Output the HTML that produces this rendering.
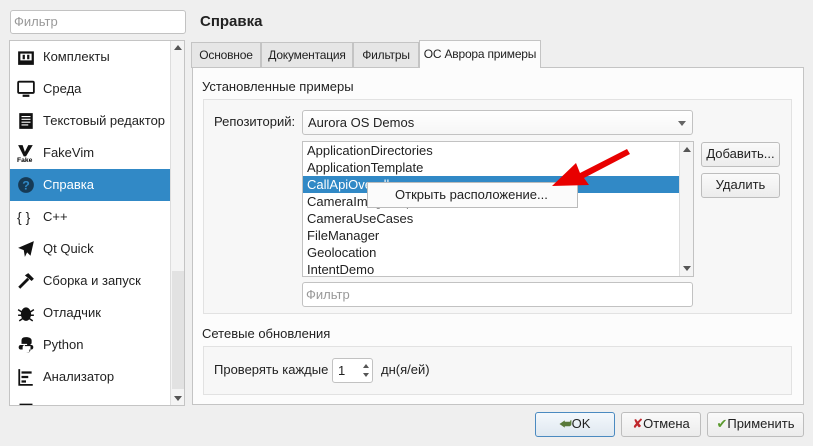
<!DOCTYPE html>
<html><head><meta charset="utf-8"><style>
*{box-sizing:border-box;margin:0;padding:0}
body{width:813px;height:446px;background:#efefef;font-family:"Liberation Sans","DejaVu Sans",sans-serif;font-size:13px;color:#222;position:relative;overflow:hidden}
.a{position:absolute;white-space:nowrap}
.inp{background:#fff;border:1px solid #c2c2c2;border-radius:3px}
.ph{color:#999}
.li{position:absolute;left:0;width:160px;height:32px;line-height:32px;padding-left:33px;white-space:nowrap}
.ic{position:absolute;left:7px;top:7px;width:18px;height:18px}
.tab{position:absolute;top:42px;height:26px;line-height:25px;background:#e6e6e6;border:1px solid #c4c4c4;border-bottom:none;text-align:center;font-size:12px;white-space:nowrap;letter-spacing:-0.2px}
.btn{position:absolute;background:linear-gradient(#fafafa,#ececec);border:1px solid #bdbdbd;border-radius:3px;text-align:center;line-height:22px;white-space:nowrap}
.it{height:17px;line-height:17px;padding-left:4px;white-space:nowrap}
</style></head><body>
<div class="a inp" style="left:10px;top:10px;width:176px;height:24px;line-height:22px;padding-left:3px"><span class="ph">Фильтр</span></div>
<div class="a" style="left:9px;top:40px;width:176px;height:366px;background:#fff;border:1px solid #c4c4c4;overflow:hidden">
 <div class="li" style="top:0"><svg class="ic" viewBox="0 0 16 16"><rect x="1" y="3" width="14" height="12" fill="#111"/><rect x="3" y="5" width="10" height="6" fill="#fff"/><rect x="5" y="6" width="2" height="4" fill="#111"/><rect x="9" y="6" width="2" height="4" fill="#111"/></svg>Комплекты</div>
 <div class="li" style="top:32px"><svg class="ic" viewBox="0 0 16 16"><rect x="1" y="1.5" width="14" height="10" rx="1" fill="none" stroke="#111" stroke-width="1.6"/><rect x="5" y="13" width="6" height="2" fill="#111"/></svg>Среда</div>
 <div class="li" style="top:64px"><svg class="ic" viewBox="0 0 16 16"><rect x="2" y="1" width="12" height="14" fill="#111"/><path d="M4 4h8M4 6.5h8M4 9h8M4 11.5h6" stroke="#fff"/></svg>Текстовый редактор</div>
 <div class="li" style="top:96px"><svg class="ic" viewBox="0 0 16 16"><path d="M1 1h4l2 6 3-6h4L8 11H6z" fill="#111"/><text x="0" y="16" font-size="6" font-family="Liberation Sans" font-weight="bold">Fake</text></svg>FakeVim</div>
 <div class="li" style="top:128px;background:#3189c6;color:#fff"><svg class="ic" viewBox="0 0 16 16"><circle cx="8" cy="8" r="7" fill="#163a55"/><text x="8" y="12" font-size="11" font-weight="bold" fill="#3189c6" text-anchor="middle" font-family="Liberation Sans">?</text></svg>Справка</div>
 <div class="li" style="top:160px"><span class="a" style="left:7px;top:0;font-size:14px">{ }</span>C++</div>
 <div class="li" style="top:192px"><svg class="ic" viewBox="0 0 16 16"><path d="M15 1L1 7l5 2 1 6 2-4 3 3z" fill="#111"/></svg>Qt Quick</div>
 <div class="li" style="top:224px"><svg class="ic" viewBox="0 0 16 16"><path d="M2 14l8-8" stroke="#111" stroke-width="2.5"/><path d="M7 3l3-2 5 5-2 2z" fill="#111"/></svg>Сборка и запуск</div>
 <div class="li" style="top:256px"><svg class="ic" viewBox="0 0 16 16"><ellipse cx="8" cy="9" rx="4.5" ry="6" fill="#111"/><path d="M1 5l3 2M15 5l-3 2M1 10h3M15 10h-3M2 15l3-2M14 15l-3-2" stroke="#111" stroke-width="1.3"/></svg>Отладчик</div>
 <div class="li" style="top:288px"><svg class="ic" viewBox="0 0 16 16"><path d="M8 1C4 1 4 3 4 5v2h5v1H3C1 8 1 12 3 12h2v-2c0-1 1-2 2-2h4c1 0 2-1 2-2V4c0-2-2-3-5-3z" fill="#111"/><path d="M8 15c4 0 4-2 4-4V9H7V8h6c2 0 2 4 0 4h-2v2c0 1-1 1-3 1z" fill="#111"/></svg>Python</div>
 <div class="li" style="top:320px"><svg class="ic" viewBox="0 0 16 16"><path d="M2 1v14h12" stroke="#111" stroke-width="1.6" fill="none"/><rect x="4" y="3" width="9" height="2" fill="#111"/><rect x="4" y="7" width="6" height="2" fill="#111"/><rect x="4" y="11" width="4" height="2" fill="#111"/></svg>Анализатор</div>
 <div class="li" style="top:352px"><svg class="ic" viewBox="0 0 16 16"><rect x="3" y="4" width="10" height="10" fill="none" stroke="#111" stroke-width="1.5"/></svg></div>
 <div class="a" style="left:160px;top:0;width:15px;height:364px;background:#f4f4f4;border-left:1px solid #ddd"><div class="a" style="left:1px;top:230px;width:13px;height:118px;background:#e2e2e2"></div><div class="a" style="left:3px;top:4px;border:4px solid transparent;border-bottom:5px solid #555;border-top:0"></div><div class="a" style="left:3px;top:355px;border:4px solid transparent;border-top:5px solid #555;border-bottom:0"></div></div>
</div>
<div class="a" style="left:200px;top:13px;font-size:15px;font-weight:bold">Справка</div>
<div class="tab" style="left:191px;width:70px">Основное</div>
<div class="tab" style="left:261px;width:92px">Документация</div>
<div class="tab" style="left:353px;width:66px">Фильтры</div>
<div class="a" style="left:192px;top:67px;width:612px;height:338px;background:#fcfcfc;border:1px solid #c4c4c4"></div>
<div class="tab" style="left:419px;top:40px;width:122px;height:28px;background:#fcfcfc;z-index:2;line-height:26px">ОС Аврора примеры</div>
<div class="a" style="left:202px;top:79px">Установленные примеры</div>
<div class="a" style="left:203px;top:99px;width:589px;height:215px;background:#f7f7f7;border:1px solid #e2e2e2"></div>
<div class="a" style="left:214px;top:114px">Репозиторий:</div>
<div class="a inp" style="left:302px;top:110px;width:391px;height:25px;line-height:23px;padding-left:5px;background:linear-gradient(#fff,#f6f6f6)">Aurora OS Demos<div class="a" style="right:6px;top:10px;border:4px solid transparent;border-top:5px solid #666;border-bottom:0"></div></div>
<div class="a" style="left:302px;top:141px;width:392px;height:136px;background:#fff;border:1px solid #c2c2c2;overflow:hidden">
 <div class="it">ApplicationDirectories</div><div class="it">ApplicationTemplate</div>
 <div class="it" style="background:#3189c6;color:#fff;width:376px">CallApiOverall</div>
 <div class="it">CameraImageCapture</div><div class="it">CameraUseCases</div><div class="it">FileManager</div><div class="it">Geolocation</div><div class="it">IntentDemo</div>
 <div class="a" style="left:376px;top:0;width:15px;height:134px;background:#f4f4f4;border-left:1px solid #ddd"><div class="a" style="left:3px;top:5px;border:4px solid transparent;border-bottom:5px solid #555;border-top:0"></div><div class="a" style="left:3px;top:124px;border:4px solid transparent;border-top:5px solid #555;border-bottom:0"></div></div>
</div>
<div class="a" style="left:367px;top:182px;width:211px;height:26px;background:#fbfbfb;border:1px solid #bbb;line-height:24px;padding-left:27px;z-index:3">Открыть расположение...</div>
<svg class="a" style="left:540px;top:145px;z-index:4" width="95" height="50" viewBox="0 0 95 50"><path d="M87 4L40 28 36 18 12 41 49 40 44 33 90 9z" fill="#e80000"/></svg>
<div class="btn" style="left:701px;top:142px;width:79px;height:25px">Добавить...</div>
<div class="btn" style="left:701px;top:173px;width:79px;height:25px">Удалить</div>
<div class="a inp" style="left:302px;top:282px;width:391px;height:25px;line-height:23px;padding-left:3px"><span class="ph">Фильтр</span></div>
<div class="a" style="left:202px;top:326px">Сетевые обновления</div>
<div class="a" style="left:203px;top:346px;width:589px;height:49px;background:#f7f7f7;border:1px solid #e2e2e2"></div>
<div class="a" style="left:214px;top:362px">Проверять каждые</div>
<div class="a inp" style="left:332px;top:358px;width:41px;height:25px;line-height:23px;padding-left:5px">1<div class="a" style="right:3px;top:5px;border:3px solid transparent;border-bottom:4px solid #555;border-top:0"></div><div class="a" style="right:3px;top:14px;border:3px solid transparent;border-top:4px solid #555;border-bottom:0"></div></div>
<div class="a" style="left:381px;top:362px">дн(я/ей)</div>
<div class="btn" style="left:535px;top:412px;width:80px;height:25px;border-color:#4b8ac0;background:linear-gradient(#f4f8fc,#dfe8f0)"><span style="color:#5a7a3a;font-weight:bold">⮨</span>OK</div>
<div class="btn" style="left:621px;top:412px;width:80px;height:25px"><span style="color:#c0282d;font-weight:bold">✘</span>Отмена</div>
<div class="btn" style="left:707px;top:412px;width:97px;height:25px"><span style="color:#5b9a2f;font-weight:bold">✔</span>Применить</div>
</body></html>
